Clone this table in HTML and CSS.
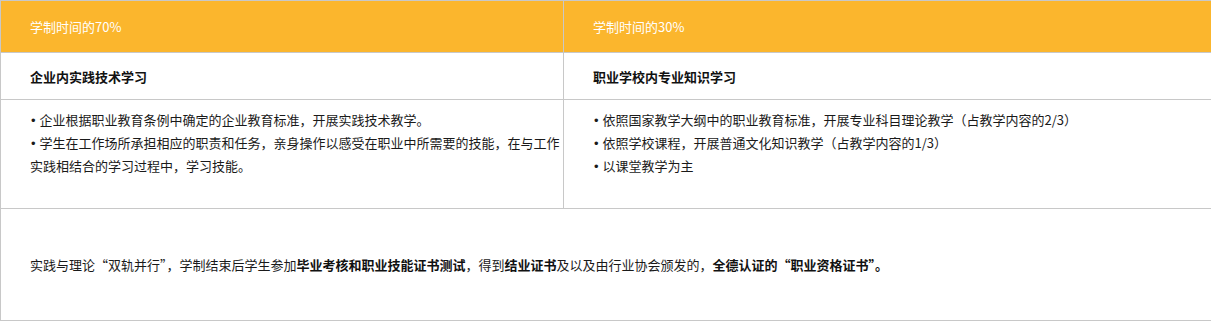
FILE: index.html
```html
<!DOCTYPE html>
<html lang="zh-CN">
<head>
<meta charset="utf-8">
<link rel="stylesheet" href="styles.css">
</head>
<body>
<div class="grid">
  <div class="cell head">学制时间的70%</div>
  <div class="cell head">学制时间的30%</div>
  <div class="cell title">企业内实践技术学习</div>
  <div class="cell title">职业学校内专业知识学习</div>
  <div class="cell body">
    <p><span class="dot">•</span>企业根据职业教育条例中确定的企业教育标准，开展实践技术教学。</p>
    <p><span class="dot">•</span>学生在工作场所承担相应的职责和任务，亲身操作以感受在职业中所需要的技能，在与工作实践相结合的学习过程中，学习技能。</p>
  </div>
  <div class="cell body">
    <p><span class="dot">•</span>依照国家教学大纲中的职业教育标准，开展专业科目理论教学（占教学内容的2/3）</p>
    <p><span class="dot">•</span>依照学校课程，开展普通文化知识教学（占教学内容的1/3）</p>
    <p><span class="dot">•</span>以课堂教学为主</p>
  </div>
  <div class="cell foot">实践与理论“双轨并行”，学制结束后学生参加<b>毕业考核和职业技能证书测试</b>，得到<b>结业证书</b>及以及由行业协会颁发的，<b>全德认证的“职业资格证书”。</b></div>
</div>
</body>
</html>
```

FILE: styles.css
```css
* { box-sizing: border-box; }
html, body { margin: 0; padding: 0; background: #fff; }
body {
  font-family: "Noto Sans CJK SC", "Microsoft YaHei", sans-serif;
  font-size: 13px;
  color: #1a1a1a;
}
.grid {
  width: 1211px;
  display: grid;
  grid-template-columns: 563px 648px;
  grid-template-rows: 52px 47px 109px 112px;
  border-top: 1px solid #c8c8c8;
  border-left: 1px solid #c8c8c8;
}
.cell {
  border-right: 1px solid #c8c8c8;
  border-bottom: 1px solid #c8c8c8;
  padding-left: 29px;
  display: flex;
  align-items: center;
}
.head {
  background: #fbb62d;
  color: #fff;
}
.title { font-weight: bold; color: #111; }
.body {
  flex-direction: column;
  align-items: flex-start;
  justify-content: flex-start;
  padding-top: 9px;
  padding-right: 3px;
  line-height: 22px;
}
.body p { margin: 0; }
.dot {
  font-family: "Liberation Sans", sans-serif;
  padding-left: 1px;
  margin-right: 4px;
}
.foot { grid-column: 1 / 3; }
.foot b { color: #111; }
```
